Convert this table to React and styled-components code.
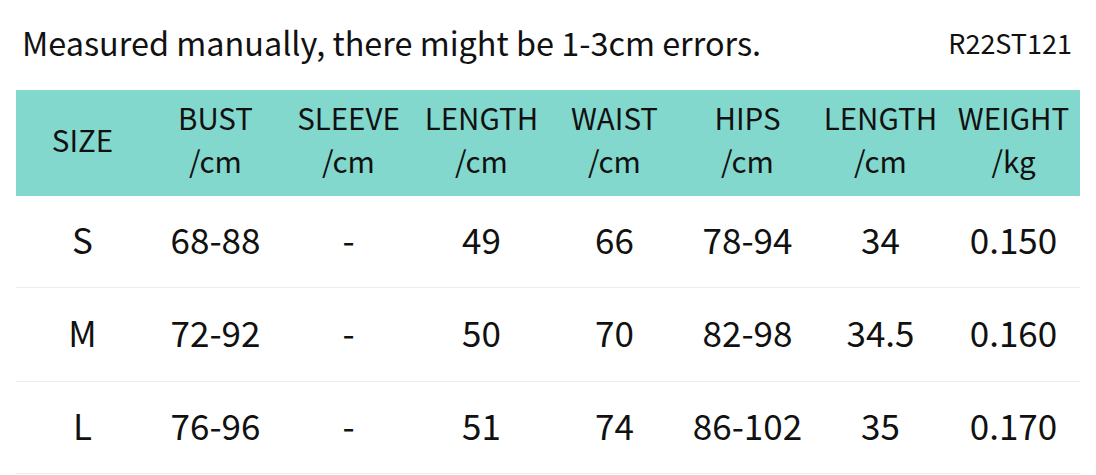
import React from "react";
import styled, { createGlobalStyle } from "styled-components";

const GlobalStyle = createGlobalStyle`
	html, body {
		margin: 0;
		padding: 0;
		background: #fff;
	}
	body {
		font-family: "Noto Sans CJK SC", "Noto Sans", sans-serif;
		color: #111;
	}
`;

const Page = styled.div`
	width: 1096px;
	height: 475px;
	overflow: hidden;
`;

const TopBar = styled.div`
	display: flex;
	justify-content: space-between;
	align-items: center;
	height: 90px;
	padding: 0 24px 6px 22px;
	box-sizing: border-box;
`;

const Note = styled.div`
	font-size: 32.4px;
	line-height: 1;
`;

const Code = styled.div`
	font-size: 27px;
	line-height: 1;
`;

const Table = styled.div`
	margin-left: 16px;
	width: 1064px;
`;

const HeadRow = styled.div`
	display: grid;
	grid-template-columns: repeat(8, 1fr);
	height: 106px;
	background: #83d8cd;
`;

const HeadCell = styled.div`
	display: flex;
	flex-direction: column;
	justify-content: center;
	align-items: center;
	font-size: 29.5px;
	line-height: 43px;
	padding-bottom: 8px;
	white-space: nowrap;
`;

const Row = styled.div`
	display: grid;
	grid-template-columns: repeat(8, 1fr);
	height: ${(p) => p.$h}px;
	border-bottom: 1px solid #ececec;
`;

const Cell = styled.div`
	display: flex;
	align-items: center;
	justify-content: center;
	font-size: 35px;
	line-height: 1;
	padding-bottom: 7px;
`;

const heads = [
	["SIZE"],
	["BUST", "/cm"],
	["SLEEVE", "/cm"],
	["LENGTH", "/cm"],
	["WAIST", "/cm"],
	["HIPS", "/cm"],
	["LENGTH", "/cm"],
	["WEIGHT", "/kg"],
];

const rows = [
	["S", "68-88", "-", "49", "66", "78-94", "34", "0.150"],
	["M", "72-92", "-", "50", "70", "82-98", "34.5", "0.160"],
	["L", "76-96", "-", "51", "74", "86-102", "35", "0.170"],
];

const heights = [91, 93, 91];

export default function App() {
	return (
		<Page>
			<GlobalStyle />
			<TopBar>
				<Note>Measured manually, there might be 1-3cm errors.</Note>
				<Code>R22ST121</Code>
			</TopBar>
			<Table>
				<HeadRow>
					{heads.map((h, i) => (
						<HeadCell key={i}>
							{h.map((line) => (
								<span key={line}>{line}</span>
							))}
						</HeadCell>
					))}
				</HeadRow>
				{rows.map((r, i) => (
					<Row key={r[0]} $h={heights[i]}>
						{r.map((v, j) => (
							<Cell key={j}>{v}</Cell>
						))}
					</Row>
				))}
			</Table>
		</Page>
	);
}
